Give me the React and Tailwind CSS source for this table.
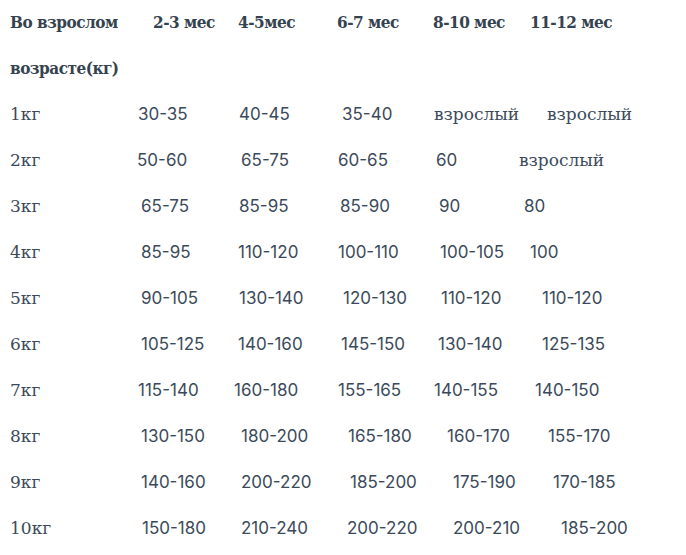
const serif = 'font-["DejaVu_Serif",serif]';
const serifBold = 'font-["DejaVu_Serif_Condensed","DejaVu_Serif",serif] [font-stretch:condensed] font-bold tracking-[-0.5px]';

// [text, offset class] per column; columns start at 10 / 137 / 234 / 337 / 433 / 519
const rows = [
  ['1кг', ['30-35', 'pl-[1px]'], ['40-45', 'pl-[5px]'], ['35-40', 'pl-[5px]'], ['взрослый', 'pl-[1px]'], ['взрослый', 'pl-[28px]']],
  ['2кг', ['50-60', 'pl-0'], ['65-75', 'pl-[7px]'], ['60-65', 'pl-[1px]'], ['60', 'pl-[3px]'], ['взрослый', 'pl-0']],
  ['3кг', ['65-75', 'pl-[4px]'], ['85-95', 'pl-[5px]'], ['85-90', 'pl-[3px]'], ['90', 'pl-[6px]'], ['80', 'pl-[5px]']],
  ['4кг', ['85-95', 'pl-[4px]'], ['110-120', 'pl-[4px]'], ['100-110', 'pl-[1px]'], ['100-105', 'pl-[7px]'], ['100', 'pl-[11px]']],
  ['5кг', ['90-105', 'pl-[4px]'], ['130-140', 'pl-[5px]'], ['120-130', 'pl-[6px]'], ['110-120', 'pl-[8px]'], ['110-120', 'pl-[23px]']],
  ['6кг', ['105-125', 'pl-[4px]'], ['140-160', 'pl-[4px]'], ['145-150', 'pl-[4px]'], ['130-140', 'pl-[5px]'], ['125-135', 'pl-[23px]']],
  ['7кг', ['115-140', 'pl-[1px]'], ['160-180', 'pl-0'], ['155-165', 'pl-[1px]'], ['140-155', 'pl-[1px]'], ['140-150', 'pl-[16px]']],
  ['8кг', ['130-150', 'pl-[4px]'], ['180-200', 'pl-[7px]'], ['165-180', 'pl-[11px]'], ['160-170', 'pl-[14px]'], ['155-170', 'pl-[29px]']],
  ['9кг', ['140-160', 'pl-[4px]'], ['200-220', 'pl-[7px]'], ['185-200', 'pl-[13px]'], ['175-190', 'pl-[20px]'], ['170-185', 'pl-[34px]']],
  ['10кг', ['150-180', 'pl-[5px]'], ['210-240', 'pl-[7px]'], ['200-220', 'pl-[10px]'], ['200-210', 'pl-[20px]'], ['185-200', 'pl-[42px]']],
];

const header = [
  ['2-3 мес', 'pl-[16px]'],
  ['4-5мес', 'pl-[4px]'],
  ['6-7 мес', 'pl-0'],
  ['8-10 мес', 'pl-0'],
  ['11-12 мес', 'pl-[11px]'],
];

const cols = 'grid grid-cols-[127px_97px_103px_96px_86px_1fr] items-center h-[46px]';

function Cell({ text, pad }) {
  const isWord = /[а-я]/i.test(text);
  return (
    <div className={`${pad} whitespace-nowrap ${isWord ? serif : ''}`}>{text}</div>
  );
}

export default function App() {
  return (
    <div className="w-[686px] h-[555px] bg-white text-[#3b4a5a] pl-[10px] text-[17px] font-['Inter',sans-serif] overflow-hidden">
      <div className={`${cols} ${serifBold} text-[#34434f]`}>
        <div className="whitespace-nowrap">Во взрослом</div>
        {header.map(([t, p]) => (
          <div key={t} className={`${p} whitespace-nowrap`}>{t}</div>
        ))}
      </div>
      <div className={`h-[46px] flex items-center ${serifBold} text-[#34434f]`}>возрасте(кг)</div>
      {rows.map(([kg, ...cells]) => (
        <div key={kg} className={cols}>
          <div className={serif}>{kg}</div>
          {cells.map(([t, p], i) => (
            <Cell key={i} text={t} pad={p} />
          ))}
        </div>
      ))}
    </div>
  );
}
